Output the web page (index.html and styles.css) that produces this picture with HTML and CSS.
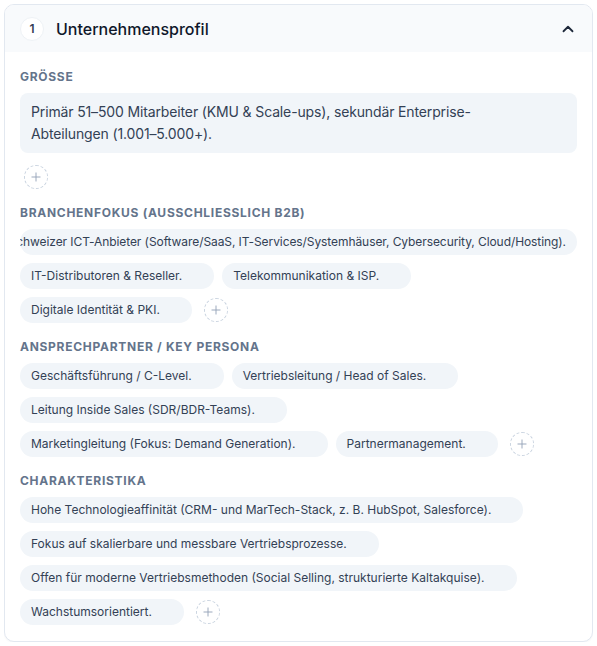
FILE: index.html
```html
<!DOCTYPE html>
<html lang="de">
<head>
<meta charset="utf-8">
<title>Unternehmensprofil</title>
<link rel="stylesheet" href="styles.css">
</head>
<body>
<section class="card">
  <header class="card-header">
    <span class="badge">1</span>
    <h2 class="title">Unternehmensprofil</h2>
    <button class="toggle" aria-label="Einklappen">
      <svg viewBox="0 0 24 24" width="18" height="18" fill="none" stroke="currentColor" stroke-width="2.4" stroke-linecap="round" stroke-linejoin="round"><polyline points="6 15 12 9 18 15"/></svg>
    </button>
  </header>
  <div class="card-body">
    <div class="field">
      <div class="label">Grösse</div>
      <div class="textbox">Primär 51–500 Mitarbeiter (KMU &amp; Scale-ups), sekundär Enterprise-Abteilungen (1.001–5.000+).</div>
      <button class="add add-block" aria-label="Hinzufügen"><svg viewBox="0 0 24 24" width="14" height="14" fill="none" stroke="currentColor" stroke-width="1.6" stroke-linecap="round"><path d="M12 5v14M5 12h14"/></svg></button>
    </div>
    <div class="field">
      <div class="label">Branchenfokus (ausschliesslich B2B)</div>
      <div class="chips">
        <span class="chip chip-wide"><span>Schweizer ICT-Anbieter (Software/SaaS, IT-Services/Systemhäuser, Cybersecurity, Cloud/Hosting).</span></span>
        <span class="chip">IT-Distributoren &amp; Reseller.</span>
        <span class="chip">Telekommunikation &amp; ISP.</span>
        <span class="chip">Digitale Identität &amp; PKI.</span>
        <button class="add" aria-label="Hinzufügen"><svg viewBox="0 0 24 24" width="14" height="14" fill="none" stroke="currentColor" stroke-width="1.6" stroke-linecap="round"><path d="M12 5v14M5 12h14"/></svg></button>
      </div>
    </div>
    <div class="field">
      <div class="label">Ansprechpartner / Key Persona</div>
      <div class="chips">
        <span class="chip">Geschäftsführung / C-Level.</span>
        <span class="chip">Vertriebsleitung / Head of Sales.</span>
        <span class="chip">Leitung Inside Sales (SDR/BDR-Teams).</span>
        <span class="chip">Marketingleitung (Fokus: Demand Generation).</span>
        <span class="chip">Partnermanagement.</span>
        <button class="add" aria-label="Hinzufügen"><svg viewBox="0 0 24 24" width="14" height="14" fill="none" stroke="currentColor" stroke-width="1.6" stroke-linecap="round"><path d="M12 5v14M5 12h14"/></svg></button>
      </div>
    </div>
    <div class="field">
      <div class="label">Charakteristika</div>
      <div class="chips">
        <span class="chip">Hohe Technologieaffinität (CRM- und MarTech-Stack, z. B. HubSpot, Salesforce).</span>
        <span class="chip">Fokus auf skalierbare und messbare Vertriebsprozesse.</span>
        <span class="chip">Offen für moderne Vertriebsmethoden (Social Selling, strukturierte Kaltakquise).</span>
        <span class="chip">Wachstumsorientiert.</span>
        <button class="add" aria-label="Hinzufügen"><svg viewBox="0 0 24 24" width="14" height="14" fill="none" stroke="currentColor" stroke-width="1.6" stroke-linecap="round"><path d="M12 5v14M5 12h14"/></svg></button>
      </div>
    </div>
  </div>
</section>
</body>
</html>
```

FILE: styles.css
```css
* { box-sizing: border-box; }

body {
  margin: 4px;
  background: #ffffff;
  font-family: Inter, "Noto Sans", "Liberation Sans", sans-serif;
  color: #334155;
}

.card {
  border: 1px solid #e2e8f0;
  border-radius: 10px;
  background: #ffffff;
  overflow: hidden;
  box-shadow: 0 1px 2px rgba(15, 23, 42, 0.04);
}

.card-header {
  display: flex;
  align-items: center;
  gap: 12px;
  height: 47px;
  padding: 0 15px 0 15px;
  background: #f8fafc;
}

.badge {
  display: flex;
  align-items: center;
  justify-content: center;
  width: 24px;
  height: 24px;
  border-radius: 50%;
  background: #ffffff;
  border: 1px solid #eef2f6;
  font-size: 12px;
  font-weight: 600;
  color: #334155;
}

.title {
  flex: 1;
  margin: 0;
  font-size: 16px;
  font-weight: 500;
  color: #0f172a;
}

.toggle {
  display: flex;
  align-items: center;
  justify-content: center;
  padding: 0;
  border: 0;
  background: none;
  color: #1e293b;
}

.card-body {
  display: flex;
  flex-direction: column;
  gap: 16px;
  padding: 17px 15px 16px;
}

.field {
  display: flex;
  flex-direction: column;
  align-items: flex-start;
}

.label {
  font-size: 12px;
  line-height: 16px;
  font-weight: 700;
  letter-spacing: 0.06em;
  text-transform: uppercase;
  color: #64748b;
  margin-bottom: 8px;
}

.textbox {
  align-self: stretch;
  background: #f1f5f9;
  border-radius: 8px;
  padding: 8px 40px 8px 11px;
  font-size: 14px;
  line-height: 22px;
  letter-spacing: -0.01em;
  color: #334155;
}

.chips {
  align-self: stretch;
  display: flex;
  flex-wrap: wrap;
  align-items: center;
  gap: 8px;
}

.chip {
  display: flex;
  flex-shrink: 0;
  max-width: 100%;
  height: 26px;
  align-items: center;
  padding: 0 32px 0 11px;
  border-radius: 13px;
  background: #f1f5f9;
  font-size: 12px;
  line-height: 18px;
  color: #334155;
  white-space: nowrap;
}

.chip-wide {
  overflow: hidden;
  justify-content: flex-end;
  padding-right: 11px;
  letter-spacing: -0.08px;
}

.chip-wide > span {
  flex: none;
}

.add {
  display: flex;
  flex-shrink: 0;
  align-items: center;
  justify-content: center;
  width: 24px;
  height: 24px;
  padding: 0;
  margin-left: 4px;
  border: 1px dashed #cbd5e1;
  border-radius: 50%;
  background: #ffffff;
  color: #94a3b8;
}

.add-block {
  margin-top: 12px;
}
```
